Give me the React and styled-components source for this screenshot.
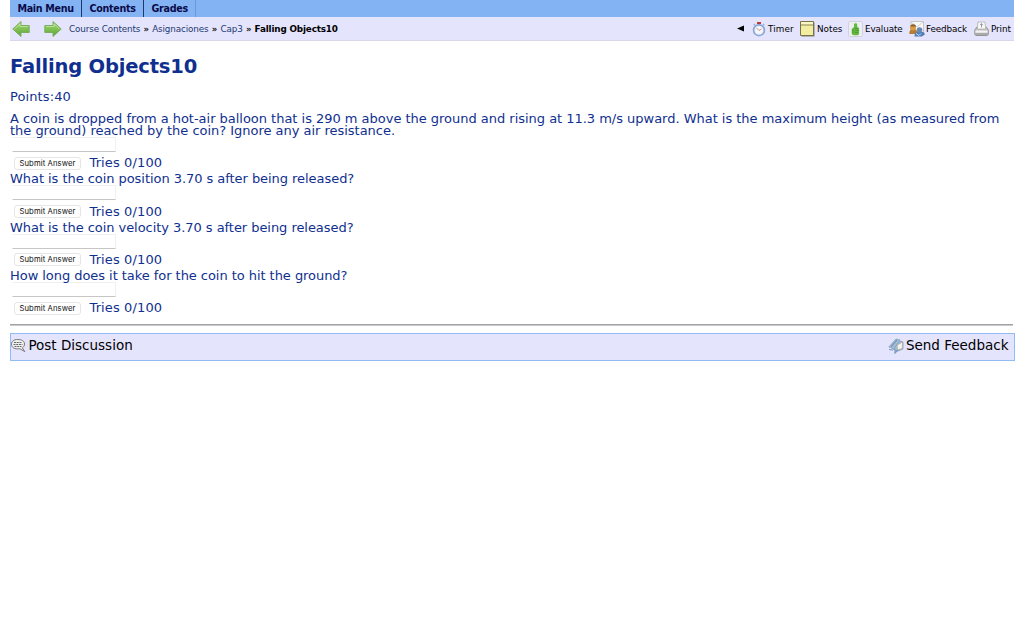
import React from 'react';
import styled, { createGlobalStyle } from 'styled-components';

const Global = createGlobalStyle`
  * { box-sizing: border-box; }
  body { margin: 0; background: #fff; font-family: Verdana, "DejaVu Sans", sans-serif; color: #10308f; overflow: hidden; }
  svg { display: block; flex: none; }
`;
const Page = styled.div`width: 1024px; padding-left: 10px;`;
const Menu = styled.nav`
  display: flex; width: 1004px; height: 17px; background: #84b3f4;
`;
const MenuItem = styled.a`
  width: ${p => p.$w}px; padding-left: 7.4px; border-right: 1px solid ${p => p.$line || '#20366e'};
  font-size: 9.6px; font-weight: bold; line-height: 17px; color: #0b0b4a; white-space: nowrap;
  letter-spacing: ${p => p.$ls}px;
`;
const Bar = styled.div`
  display: flex; justify-content: space-between; width: 1004px; height: 24px;
  background: #e5e4fd; border-bottom: 1px solid #d9d7ea;
`;
const Crumbs = styled.div`
  display: flex; align-items: center; height: 23px; padding-left: 2px; font-size: 8.8px; white-space: nowrap;
`;
const Arrow = styled.span`margin-right: ${p => p.$gap}px;`;
const Crumb = styled.a`color: #1c3a6e; letter-spacing: -0.12px;`;
const Sep = styled.span`width: 11.9px; text-align: center; color: #111; font-weight: bold; font-size: 8.5px;`;
const Current = styled.b`color: #000; letter-spacing: -0.15px;`;
const Tools = styled.div`display: flex; align-items: center; height: 23px;`;
const Collapse = styled.span`width: 15px; display: flex;`;
const Tool = styled.a`
  display: flex; align-items: center; width: ${p => p.$w}px; gap: ${p => p.$gap ?? 2}px;
  font-size: 8.8px; color: #000; white-space: nowrap; letter-spacing: ${p => p.$ls || 0}px;
`;
const Title = styled.h1`
  margin: 12px 0 0; height: 28px; line-height: 28px; font-size: 19.5px; font-weight: bold; letter-spacing: -0.18px;
  white-space: nowrap;
`;
const Points = styled.div`margin-top: 8px; height: 16px; line-height: 16px; font-size: 13px; letter-spacing: 0.1px;`;
const Prompt = styled.div`
  height: ${p => p.$h}px; padding-top: ${p => p.$top}px; font-size: 13px;
  line-height: ${p => p.$lh || 16}px; letter-spacing: -0.05px; white-space: nowrap;
`;
const Line = styled.div`letter-spacing: -0.022px;`;
const Answer = styled.div`height: 32.3px;`;
const Field = styled.input`
  display: block; width: 104px; height: 15px; margin: 0 0 0 2px; padding: 0;
  background: transparent; border: 1px solid #f0f0f0; border-left-color: #fff; border-bottom-color: #c6c6c6;
`;
const SubmitRow = styled.div`display: flex; align-items: center; height: 17.3px; padding: 5px 0 0 4px;`;
const Submit = styled.button`
  width: 67px; height: 13px; padding: 0; border: 1px solid #e6e6e6; border-radius: 3px;
  background: #fff; color: #111; font: 7.7px/11px Inter, sans-serif; white-space: nowrap; letter-spacing: 0.1px;
`;
const Tries = styled.span`margin-left: 8.5px; font-size: 13px; letter-spacing: 0.12px; line-height: 12px; white-space: nowrap; padding-top: 0.4px;`;
const Rule = styled.hr`width: 1003px; height: 2px; margin: 9.8px 0 0; border: 0; background: #a3a3a8; border-bottom: 1px solid #c9c9cc;`;
const Footer = styled.footer`
  display: flex; justify-content: space-between; width: 1005px; height: 28px; margin-top: 6.8px;
  padding: 0 5.5px 3px 0; background: #e5e4fd; border: 1px solid #91bbf3;
`;
const FootLink = styled.a`
  display: flex; align-items: center; gap: 2.4px; color: #000; font-size: 13.5px; white-space: nowrap;
`;

const GreenArrow = ({ flip }) => (
  <svg width="18" height="18" viewBox="0 0 18 18" transform={flip ? 'scale(-1 1)' : undefined}>
    <defs><linearGradient id="leaf" x2="0" y2="1"><stop stopColor="#a9da7d" /><stop offset="1" stopColor="#59a52c" /></linearGradient></defs>
    <path d="M.8 9 9 1.5V5.5H17.2V12.5H9V16.5Z" fill="url(#leaf)" stroke="#79ae60" strokeWidth="1" strokeLinejoin="round" />
    <path d="M2.5 9 8 4V6.5H16" fill="none" stroke="#c0e7a0" strokeWidth=".8" />
  </svg>
);
const TimerIcon = () => (
  <svg width="14" height="16" viewBox="0 0 14 16">
    <path d="M5 1h4v2H5z" fill="#b83b35" /><path d="M6 3h2v1H6z" fill="#777" />
    <path d="M1.7 4.2 3 3M11 3l1.3 1.2" stroke="#91a8cf" strokeWidth="1.2" />
    <circle cx="7" cy="9.2" r="5.4" fill="#f7f9fd" stroke="#89a5d6" strokeWidth="1.7" />
    <circle cx="7" cy="9.2" r="3.6" fill="none" stroke="#dde0eb" strokeWidth=".8" strokeDasharray="1 1.2" />
    <path d="M4.5 7 7 9.5 9.5 8" fill="none" stroke="#c98f78" strokeWidth="1" />
  </svg>
);
const NotesIcon = () => (
  <svg width="15" height="16" viewBox="0 0 15 16">
    <path d="M1.5 1.5h13v14h-13z" fill="#827e6b" /><path d="M.5.5h13v14H.5z" fill="#f2eda0" stroke="#77724d" />
    <path d="M1 1h12v2.5H1z" fill="#faf7c5" /><path d="M1 4h12" stroke="#8b865b" />
  </svg>
);
const EvaluateIcon = () => (
  <svg width="15" height="16" viewBox="0 0 15 16">
    <rect x=".5" y=".5" width="14" height="15" rx="1" fill="#eceff2" stroke="#d1d3dc" />
    <path d="M6 6V3.500c0-1.600 3.200-1.600 3.200 0V6l1.900 1v5.200c0 1.800-1 2-3.600 2s-3.800-.4-3.800-2V8Z" fill="#65b83f" />
    <path d="M7 7.500h3M7 9.500h3.500M7 11.500h3M5 8.500v3.500" stroke="#428f33" strokeWidth=".7" />
  </svg>
);
const FeedbackIcon = () => (
  <svg width="16" height="16" viewBox="0 0 16 16">
    <path d="M2 .5h12.500v11H2z" fill="#f7f7f5" stroke="#c5c5c8" /><path d="m2 1 6 5 6-5" fill="none" stroke="#d2d2d0" />
    <path d="M.3 13c0-4 1.500-5 4-5s4 1 4 5Z" fill="#b37d34" /><circle cx="4" cy="6.500" r="3" fill="#d99a40" />
    <path d="M1.500 5.500c0-3 5-3 5.500 0" fill="#80613a" />
    <path d="M5.500 15.500c0-4 2-5 5.500-5s4.800 1 4.800 3l-3 2Z" fill="#4e7fb9" /><circle cx="10.500" cy="9" r="2.800" fill="#6689b6" />
    <path d="M7 12.500l3 2 2-2" stroke="#c9dcf0" fill="none" />
  </svg>
);
const PrintIcon = () => (
  <svg width="15" height="16" viewBox="0 0 15 16">
    <path d="M2.800 6 .8 9v4.500l1 1h11.500l1-1V9l-2-3Z" fill="#c2c2c2" stroke="#8e8e8e" strokeWidth=".9" />
    <path d="M4 1h7l.7 7H3.300z" fill="#fafafa" stroke="#adadad" strokeWidth=".8" />
    <path d="M7.500 2.500v4M6 4.200 7.500 2.700 9 4.200" fill="none" stroke="#999" />
    <path d="M1.500 9.500h12v2.200h-12z" fill="#f3f3f3" /><path d="M1.500 13h12" stroke="#858585" strokeWidth=".8" />
  </svg>
);
const DiscussionIcon = () => (
  <svg width="15" height="15" viewBox="0 0 15 15">
    <path d="M6.500 1.500C11 1.500 13.500 3 13.500 6c0 1.800-.8 3-2.200 3.800l2.500 3.800-5-2.900C3.500 11.500.5 9.500.5 6.200c0-3 2.500-4.700 6-4.700Z" fill="#f0eff0" stroke="#787878" strokeWidth="1" />
    <path d="M3 4.500h8M2.500 6.500h9M3.500 8.500h7" stroke="#666" strokeDasharray="2 .7" />
  </svg>
);
const SendIcon = () => (
  <svg width="16" height="17" viewBox="0 0 16 17">
    <path d="M.8 10 8 2l4 1-6 9ZM5 12l7-8 3 1v7l-5 2Z" fill="#a9c1d8" stroke="#84a1be" strokeWidth=".8" />
    <path d="m9 8 5.500-3v6.500L9.500 13Z" fill="#f3f2eb" stroke="#a2a49f" strokeWidth=".7" />
    <path d="M3 10 9 3M1 12.500l4 .5M7 12v4l3-3" fill="none" stroke="#7698b9" strokeWidth="1.200" />
  </svg>
);
const AnswerPart = () => (
  <Answer><Field /><SubmitRow><Submit>Submit Answer</Submit><Tries>Tries 0/100</Tries></SubmitRow></Answer>
);

export default function App() {
  return <><Global /><Page>
    <Menu><MenuItem $w={72} $ls={-0.3}>Main Menu</MenuItem><MenuItem $w={62} $ls={-0.3}>Contents</MenuItem><MenuItem $w={52} $ls={-0.25} $line="#6b96d7">Grades</MenuItem></Menu>
    <Bar>
      <Crumbs>
        <Arrow $gap={14}><GreenArrow /></Arrow><Arrow $gap={7}><GreenArrow flip /></Arrow>
        <Crumb>Course Contents</Crumb><Sep>»</Sep><Crumb>Asignaciones</Crumb><Sep>»</Sep><Crumb>Cap3</Crumb><Sep>»</Sep><Current>Falling Objects10</Current>
      </Crumbs>
      <Tools>
        <Collapse><svg width="7" height="7" viewBox="0 0 7 7"><path d="M0 3.500 7 .5v6Z" fill="#000" /></svg></Collapse>
        <Tool $w={48} $ls={0.1}><TimerIcon />Timer</Tool><Tool $w={48}><NotesIcon />Notes</Tool>
        <Tool $w={61} $ls={-0.1}><EvaluateIcon />Evaluate</Tool><Tool $w={65} $gap={1} $ls={-0.1}><FeedbackIcon />Feedback</Tool><Tool $w={40} $ls={-0.1}><PrintIcon />Print</Tool>
      </Tools>
    </Bar>
    <Title>Falling Objects10</Title>
    <Points>Points:40</Points>
    <Prompt $top={8} $h={32} $lh={12}><Line>A coin is dropped from a hot-air balloon that is 290 m above the ground and rising at 11.3 m/s upward. What is the maximum height (as measured from</Line><Line>the ground) reached by the coin? Ignore any air resistance.</Line></Prompt>
    <AnswerPart />
    <Prompt $top={2.1} $h={16}>What is the coin position 3.70 s after being released?</Prompt><AnswerPart />
    <Prompt $top={2.1} $h={16}>What is the coin velocity 3.70 s after being released?</Prompt><AnswerPart />
    <Prompt $top={2.1} $h={16}>How long does it take for the coin to hit the ground?</Prompt><AnswerPart />
    <Rule />
    <Footer><FootLink><DiscussionIcon />Post Discussion</FootLink><FootLink><SendIcon />Send Feedback</FootLink></Footer>
  </Page></>;
}
